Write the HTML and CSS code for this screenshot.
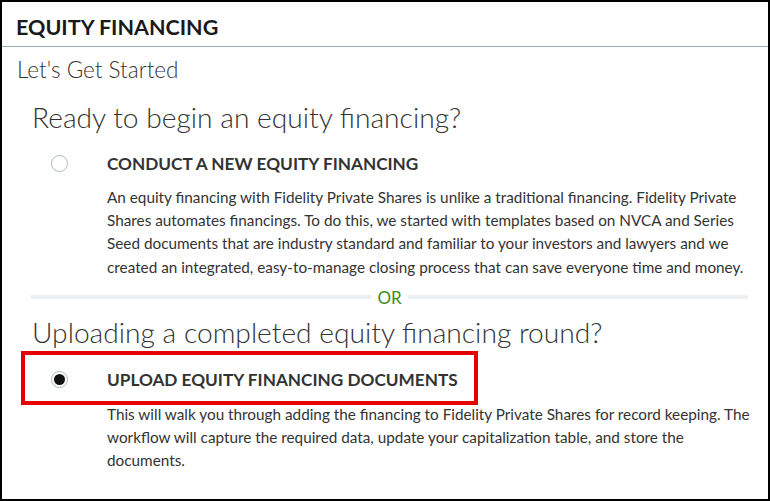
FILE: index.html
```html
<!DOCTYPE html>
<html lang="en">
  <head>
    <meta charset="UTF-8" />
    <meta name="viewport" content="width=device-width, initial-scale=1.0" />
    <title>Equity Financing</title>
    <link rel="stylesheet" href="styles.css">
  </head>
  <body>
    <div class="panel">
      <div class="panel-header">
        <h1>EQUITY FINANCING</h1>
      </div>
      <p class="intro">Let's Get Started</p>

      <h2>Ready to begin an equity financing?</h2>
      <label class="option">
        <span class="radio"></span>
        <span class="option-title">CONDUCT A NEW EQUITY FINANCING</span>
      </label>
      <p class="option-desc">
        An equity financing with Fidelity Private Shares is unlike a traditional financing. Fidelity Private
        Shares automates financings. To do this, we started with templates based on NVCA and Series
        Seed documents that are industry standard and familiar to your investors and lawyers and we
        created an integrated, easy-to-manage closing process that can save everyone time and money.
      </p>

      <div class="divider">
        <span class="divider-line"></span>
        <span class="divider-text">OR</span>
        <span class="divider-line"></span>
      </div>

      <h2>Uploading a completed equity financing round?</h2>
      <label class="option highlight">
        <span class="radio checked"></span>
        <span class="option-title">UPLOAD EQUITY FINANCING DOCUMENTS</span>
      </label>
      <p class="option-desc last">
        This will walk you through adding the financing to Fidelity Private Shares for record keeping. The
        workflow will capture the required data, update your capitalization table, and store the
        documents.
      </p>
    </div>
  </body>
</html>
```

FILE: styles.css
```css
* {
  box-sizing: border-box;
}
body {
  margin: 0;
  font-family: "Lato", "Noto Sans", sans-serif;
  color: #333;
  background: #fff;
}
.panel {
  width: 770px;
  height: 501px;
  border: 2px solid #000;
  overflow: hidden;
}
.panel-header {
  height: 45px;
  padding: 13px 14px 0;
  border-bottom: 1px solid #9aabab;
}
h1 {
  margin: 0;
  font-size: 21.5px;
  font-weight: 700;
  color: #1a1a1a;
  line-height: 24px;
}
.intro {
  margin: 9px 0 0 15px;
  font-size: 22.5px;
  font-weight: 300;
  line-height: 28px;
}
h2 {
  margin: 16px 0 0 30px;
  font-size: 28.2px;
  font-weight: 300;
  line-height: 34px;
}
.option {
  display: flex;
  align-items: center;
  margin: 17px 0 0 49px;
  height: 24px;
}
.radio {
  width: 17px;
  height: 17px;
  border: 1px solid #a9baba;
  border-radius: 50%;
  display: flex;
  align-items: center;
  justify-content: center;
  flex-shrink: 0;
}
.radio.checked::after {
  content: "";
  width: 11px;
  height: 11px;
  border-radius: 50%;
  background: #111;
}
.option-title {
  margin-left: 39px;
  font-size: 17.2px;
  font-weight: 700;
  color: #333;
}
.option.highlight {
  margin: 2px 0 0 19px;
  width: 457px;
  height: 54px;
  padding: 4px 0 0 26px;
  border: 4px solid #e60000;
}
.option-desc {
  margin: 11px 0 0 105px;
  width: 655px;
  font-size: 15.3px;
  line-height: 23.2px;
}
.option-desc.last {
  margin-top: -2px;
}
.divider {
  display: flex;
  align-items: center;
  margin: 8px 20px 0 29px;
}
.divider-line {
  flex: 1;
  height: 4px;
  background: #ebeff2;
}
.divider-text {
  padding: 0 6px;
  font-size: 17px;
  color: #3d8c1f;
}
.divider + h2 {
  margin-top: 7px;
}
```
